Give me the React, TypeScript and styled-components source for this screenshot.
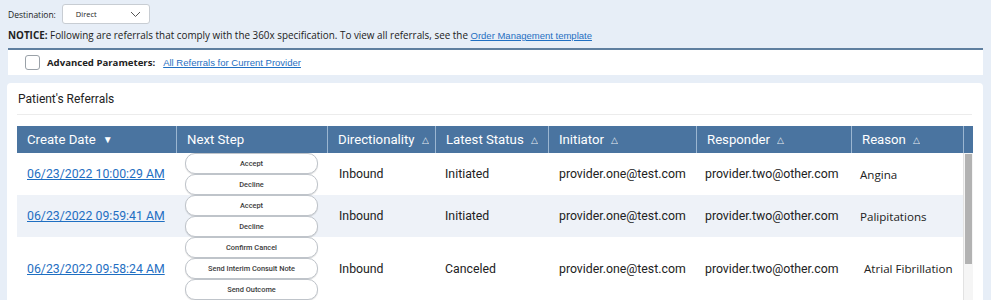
import React from "react";
import styled, { createGlobalStyle } from "styled-components";

const GlobalStyle = createGlobalStyle`
  html, body {
    margin: 0;
    padding: 0;
    height: 300px;
    overflow: hidden;
    background: #e7eef7;
    font-family: "Open Sans", "Noto Sans", sans-serif;
    color: #222;
  }
`;

const Page = styled.div`
  padding: 3px 8px 0 7px;
`;

const DestRow = styled.div`
  display: flex;
  align-items: center;
  gap: 6px;
  height: 22px;
  padding-left: 1px;
  font-size: 8.5px;
`;

const Select = styled.div`
  width: 88px;
  height: 20px;
  box-sizing: border-box;
  background: #fff;
  border: 1px solid #c8cdd3;
  border-radius: 3px;
  display: flex;
  align-items: center;
  justify-content: space-between;
  padding: 0 8px 0 13px;
  font-size: 7.5px;
`;

const Notice = styled.div`
  font-size: 9.9px;
  padding: 3px 0 0 1px;
  height: 19px;
  box-sizing: border-box;
  white-space: nowrap;
  b {
    font-weight: 700;
  }
`;

const SmallLink = styled.a`
  color: #1f6fc2;
  text-decoration: underline;
  font-family: "Liberation Sans Narrow", "Liberation Sans", sans-serif;
  font-size: 9.5px;
`;

const ParamBar = styled.div`
  margin-top: 4px;
  margin-left: 1px;
  height: 27px;
  box-sizing: border-box;
  background: #fff;
  border-top: 2px solid #5f7f9f;
  display: flex;
  align-items: center;
  padding-left: 17px;
  gap: 7px;
  font-size: 9.6px;
  b {
    font-weight: 700;
    margin-right: 1px;
  }
`;

const Check = styled.span`
  width: 13px;
  height: 13px;
  border: 1px solid #9aa1a8;
  border-radius: 3px;
  background: #fff;
`;

const Card = styled.div`
  margin-top: 8px;
  background: #fff;
  border-radius: 4px;
  padding: 9px 10px 0 10px;
  height: 230px;
  box-sizing: border-box;
`;

const Title = styled.div`
  font-family: Roboto, sans-serif;
  font-size: 12px;
  color: #222;
  padding: 0 0 8px 1px;
  border-bottom: 1px solid #ececec;
  margin-right: 1px;
`;

const cols = "159px 151px 108px 113px 148px 155px 112px 9px";

const Header = styled.div`
  margin-top: 11px;
  display: grid;
  grid-template-columns: ${cols};
  background: #4a74a0;
  height: 27px;
`;

const HeadCell = styled.div`
  display: flex;
  align-items: center;
  padding-left: 10px;
  color: #fff;
  font-family: Roboto, sans-serif;
  font-size: 13.2px;
  border-left: ${({ first }: any) => (first ? "none" : "1px solid #9bb6d1")};
  white-space: nowrap;
  overflow: hidden;
`;

const Sort = styled.span`
  font-size: ${({ down }: any) => (down ? 10 : 9)}px;
  margin-left: 7px;
  opacity: ${({ down }: any) => (down ? 1 : 0.85)};
`;

const BodyWrap = styled.div`
  display: flex;
`;

const Rows = styled.div`
  flex: 0 0 946px;
`;

const Row = styled.div`
  display: grid;
  grid-template-columns: 159px 151px 108px 113px 148px 155px 112px;
  background: ${({ alt }: any) => (alt ? "#eef2f8" : "#fff")};
`;

const Cell = styled.div`
  display: flex;
  align-items: center;
  padding-left: ${({ pad }: any) => pad ?? 10}px;
  font-family: ${({ serifless }: any) =>
    serifless ? '"Open Sans", sans-serif' : "Roboto, sans-serif"};
  font-size: ${({ serifless }: any) => (serifless ? 11.6 : 12.3)}px;
  color: #222;
  white-space: nowrap;
  overflow: hidden;
`;

const DateLink = styled.a`
  color: #1f6fc2;
  text-decoration: underline;
  font-family: Roboto, sans-serif;
  font-size: 12.3px;
`;

const Steps = styled.div`
  display: flex;
  flex-direction: column;
  padding-left: 9px;
`;

const StepButton = styled.button`
  width: 133px;
  height: 21px;
  box-sizing: border-box;
  border: 1px solid #bfc4ca;
  border-radius: 10px;
  background: #fff;
  font-family: Roboto, sans-serif;
  font-size: 7.4px;
  font-weight: 500;
  color: #3a3a3a;
  padding: 0;
  box-shadow: 0 1px 1px rgba(0, 0, 0, 0.12);
`;

const Track = styled.div`
  width: 9px;
  background: #f5f5f5;
  border-left: 1px solid #e2e2e2;
`;

const Thumb = styled.div`
  width: 7px;
  height: 110px;
  margin: 1px 0 0 1px;
  background: #b2b2b2;
`;

const rows = [
  {
    date: "06/23/2022 10:00:29 AM",
    steps: ["Accept", "Decline"],
    status: "Initiated",
    reason: "Angina",
    rpad: 9,
  },
  {
    date: "06/23/2022 09:59:41 AM",
    steps: ["Accept", "Decline"],
    status: "Initiated",
    reason: "Palipitations",
    rpad: 9,
  },
  {
    date: "06/23/2022 09:58:24 AM",
    steps: ["Confirm Cancel", "Send Interim Consult Note", "Send Outcome"],
    status: "Canceled",
    reason: "Atrial Fibrillation",
    rpad: 13,
  },
];

const heads = [
  "Create Date",
  "Next Step",
  "Directionality",
  "Latest Status",
  "Initiator",
  "Responder",
  "Reason",
];

export default function App() {
  return (
    <Page>
      <GlobalStyle />
      <DestRow>
        <span>Destination:</span>
        <Select>
          <span>Direct</span>
          <svg width="11" height="7" viewBox="0 0 11 7">
            <path d="M1 1l4.5 4.5L10 1" fill="none" stroke="#555" strokeWidth="1" />
          </svg>
        </Select>
      </DestRow>
      <Notice>
        <b>NOTICE:</b> Following are referrals that comply with the 360x
        specification. To view all referrals, see the{" "}
        <SmallLink href="#">Order Management template</SmallLink>
      </Notice>
      <ParamBar>
        <Check />
        <b>Advanced Parameters:</b>
        <SmallLink href="#">All Referrals for Current Provider</SmallLink>
      </ParamBar>
      <Card>
        <Title>Patient's Referrals</Title>
        <Header>
          {heads.map((h, i) => (
            <HeadCell key={h} first={i === 0}>
              {h}
              {i === 0 ? <Sort down>▼</Sort> : i === 1 ? null : <Sort>△</Sort>}
            </HeadCell>
          ))}
          <HeadCell />
        </Header>
        <BodyWrap>
          <Rows>
            {rows.map((r, i) => (
              <Row key={r.date} alt={i === 1}>
                <Cell>
                  <DateLink href="#">{r.date}</DateLink>
                </Cell>
                <Steps>
                  {r.steps.map((s) => (
                    <StepButton key={s}>{s}</StepButton>
                  ))}
                </Steps>
                <Cell pad={12}>Inbound</Cell>
                <Cell>{r.status}</Cell>
                <Cell pad={11}>provider.one@test.com</Cell>
                <Cell pad={9}>provider.two@other.com</Cell>
                <Cell serifless pad={r.rpad}>
                  {r.reason}
                </Cell>
              </Row>
            ))}
          </Rows>
          <Track>
            <Thumb />
          </Track>
        </BodyWrap>
      </Card>
    </Page>
  );
}
